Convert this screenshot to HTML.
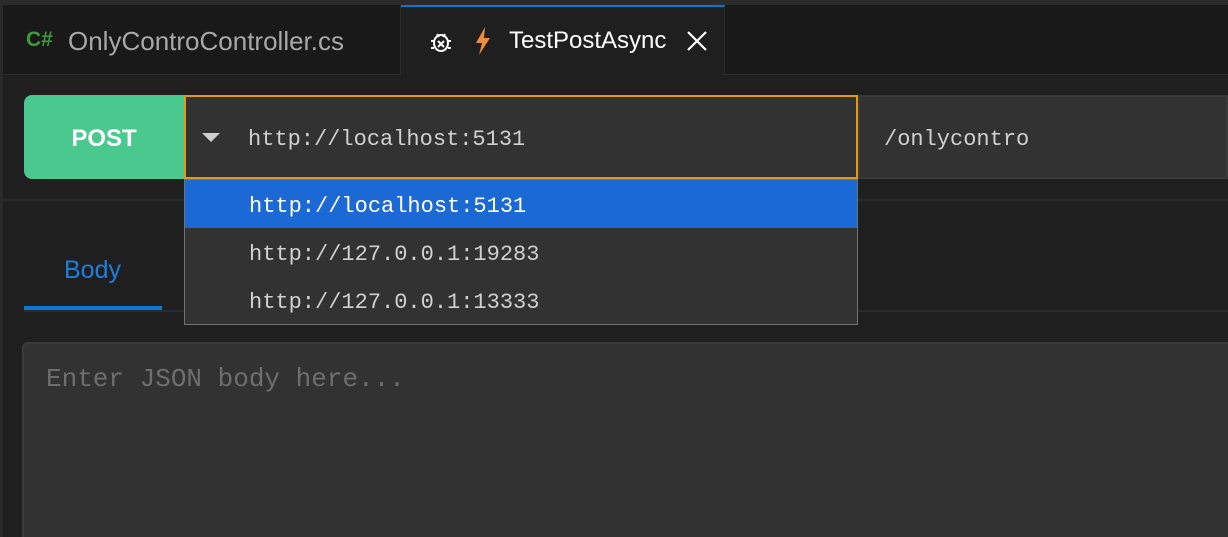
<!DOCTYPE html>
<html style="overflow:hidden;height:537px"><head><style>
*{margin:0;padding:0;box-sizing:border-box}
body{width:1228px;height:537px;background:#1f1f1f;position:relative;overflow:hidden;font-family:"Liberation Sans",sans-serif}
.a{position:absolute}
.mono{font-family:"Liberation Mono",monospace}
</style></head><body>
<div class="a" style="left:0;top:0;width:1228px;height:4px;background:#2a2a2a"></div>
<div class="a" style="left:0;top:4px;width:1228px;height:70px;background:#191919;border-top:1px solid #2b2b2b"></div>
<div class="a" style="left:0;top:74px;width:1228px;height:1px;background:#2b2b2b"></div>
<div class="a" style="left:0;top:4px;width:3px;height:533px;background:#2a2a2a"></div>
<!-- tab 1 -->
<div class="a" style="left:26px;top:28px;color:#3d9a3d;font-weight:bold;font-size:21px">C#</div>
<div class="a" style="left:68px;top:26px;color:#a8a8a8;font-size:26px">OnlyControController.cs</div>
<div class="a" style="left:400px;top:5px;width:1px;height:70px;background:#2b2b2b"></div>
<!-- active tab -->
<div class="a" style="left:401px;top:5px;width:324px;height:70px;background:#1f1f1f;border-top:2px solid #0a78d4;border-right:1px solid #2b2b2b"></div>
<svg class="a" style="left:428px;top:28px" width="26" height="26" viewBox="0 0 26 26" fill="none" stroke="#fff" stroke-width="2"><ellipse cx="13" cy="15" rx="7" ry="8"/><path d="M9 6l2 3M17 6l-2 3M3 13h3M20 13h3M3 20h3M20 20h3M10 13l6 6M16 13l-6 6"/></svg>
<svg class="a" style="left:473px;top:27px" width="20" height="28" viewBox="0 0 20 28"><path d="M12 0L3 16h6l-3 12 11-17h-6z" fill="#f08a3c"/></svg>
<div class="a" style="left:509px;top:27px;color:#fff;font-size:24px">TestPostAsync</div>
<svg class="a" style="left:686px;top:30px" width="22" height="22" viewBox="0 0 22 22" stroke="#fff" stroke-width="2.2"><path d="M2 2l18 18M20 2L2 20"/></svg>
<!-- request row -->
<div class="a" style="left:24px;top:95px;width:160px;height:84px;background:#4ac98e;border-radius:8px 0 0 8px;color:#fff;font-weight:bold;font-size:24px;line-height:88px;text-align:center">POST</div>
<div class="a" style="left:184px;top:95px;width:674px;height:84px;background:#323232;border:2px solid #e59a0c"></div>
<div class="a" style="left:202px;top:133px;width:0;height:0;border-left:9px solid transparent;border-right:9px solid transparent;border-top:9px solid #cfcfcf"></div>
<div class="a mono" style="left:248px;top:127px;color:#d0d0d0;font-size:22px">http://localhost:5131</div>
<div class="a" style="left:858px;top:95px;width:370px;height:84px;background:#323232;border:2px solid #3a3a3a"></div>
<div class="a mono" style="left:884px;top:127px;color:#d0d0d0;font-size:22px">/onlycontro</div>
<div class="a" style="left:0;top:199px;width:1228px;height:2px;background:#2b2b2b"></div>
<!-- body tab -->
<div class="a" style="left:64px;top:256px;color:#1a7fe0;font-size:25px">Body</div>
<div class="a" style="left:24px;top:310px;width:1204px;height:2px;background:#2b2b2b"></div>
<div class="a" style="left:24px;top:306px;width:138px;height:4px;background:#0a78d4"></div>
<!-- textarea -->
<div class="a" style="left:22px;top:342px;width:1220px;height:205px;background:#323232;border:2px solid #3a3a3a;border-radius:6px"></div>
<div class="a mono" style="left:46px;top:364px;color:#6e6e6e;font-size:26px">Enter JSON body here...</div>
<!-- dropdown -->
<div class="a" style="left:184px;top:179px;width:674px;height:146px;background:#323232;border:1px solid #727272"></div>
<div class="a" style="left:185px;top:180px;width:672px;height:48px;background:#1b69d4"></div>
<div class="a mono" style="left:249px;top:194px;color:#fff;font-size:22px">http://localhost:5131</div>
<div class="a mono" style="left:249px;top:242px;color:#d0d0d0;font-size:22px">http://127.0.0.1:19283</div>
<div class="a mono" style="left:249px;top:290px;color:#d0d0d0;font-size:22px">http://127.0.0.1:13333</div>
</body></html>
